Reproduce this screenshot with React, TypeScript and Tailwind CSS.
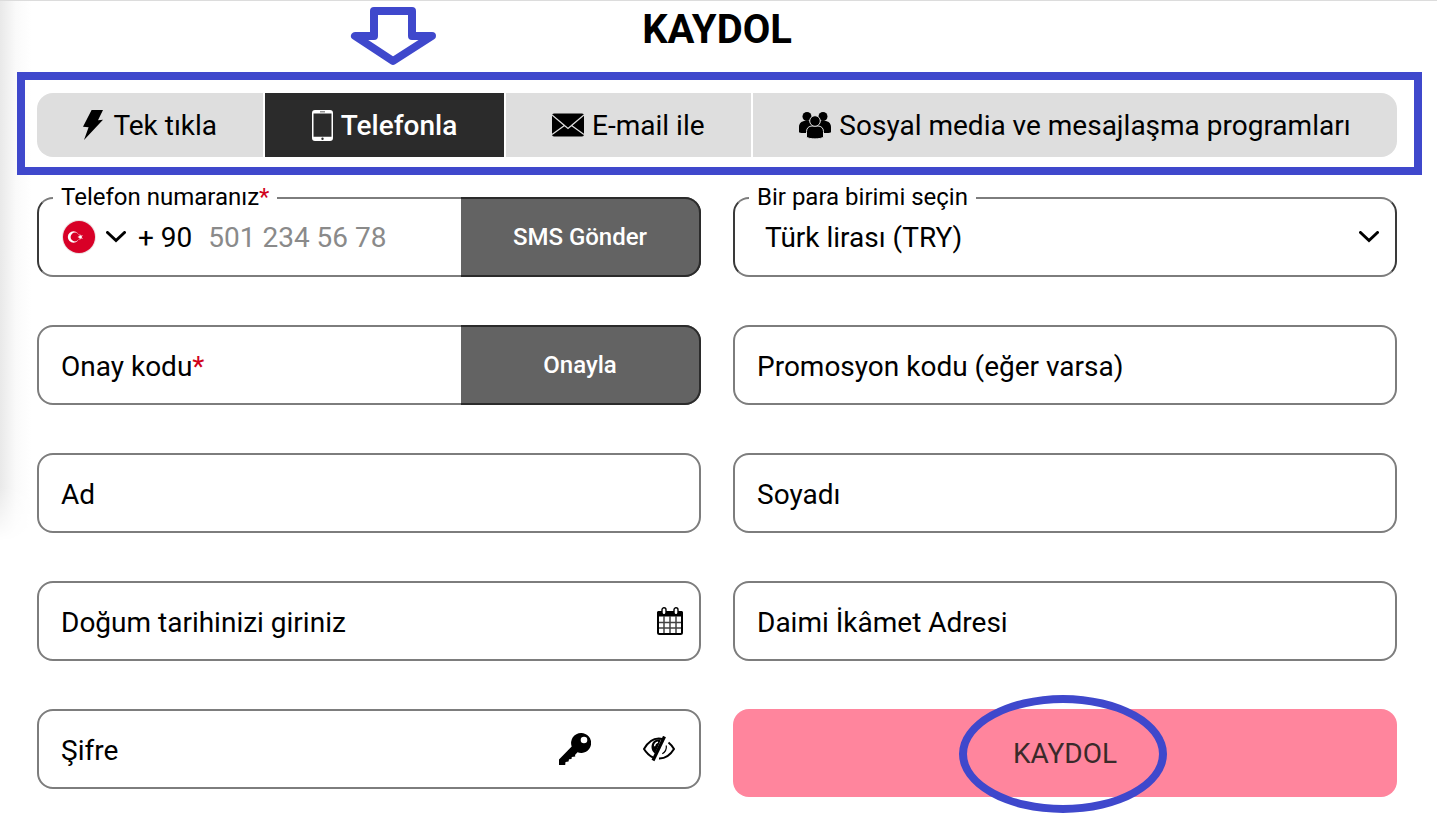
import type { ReactNode } from "react";

const ink = "text-[28px] leading-8 text-black";

function BoltIcon() {
  return (
    <svg viewBox="0 0 20 30" className="mr-0.5 h-[30px] w-5" fill="currentColor" aria-hidden="true">
      <path d="M8.6 0H20l-5 10.2 5-.4L1 30 5.600 17.200 0 16.800z" />
    </svg>
  );
}

function PhoneIcon() {
  return (
    <svg viewBox="0 0 21 31" className="h-[31px] w-[21px]" aria-hidden="true">
      <path
        fillRule="evenodd"
        fill="currentColor"
        d="M3 0h15a3 3 0 0 1 3 3v25a3 3 0 0 1-3 3H3a3 3 0 0 1-3-3V3a3 3 0 0 1 3-3zM1.500 3.600h18v23.200h-18zM8 1.500h5v.8H8zM10.500 27.600a1.200 1.200 0 1 0 0 2.400 1.200 1.200 0 0 0 0-2.400z"
      />
    </svg>
  );
}

function MailIcon() {
  return (
    <svg viewBox="0 0 32 24" className="h-6 w-8" aria-hidden="true">
      <rect width="32" height="23" y=".5" rx="2" fill="currentColor" />
      <path d="M0 2l12.500 10.500L0 21.500M32 2L19.500 12.500 32 21.500M12.500 12.500L16 15.500l3.500-3" fill="none" stroke="#dedede" strokeWidth="1.300" />
    </svg>
  );
}

function PeopleIcon() {
  return (
    <svg viewBox="0 0 32 27" className="h-[27px] w-8" fill="currentColor" aria-hidden="true">
      <circle cx="8" cy="4.500" r="4.500" />
      <circle cx="24" cy="4.500" r="4.500" />
      <path d="M0 20v-5c0-4 3-6 6-6h4c3 0 4 2 4 4v8H4c-2 0-4-.3-4-1zM32 20v-5c0-4-3-6-6-6h-4c-3 0-4 2-4 4v8h10c2 0 4-.3 4-1z" />
      <g stroke="#dedede" strokeWidth="1">
        <path d="M7.500 25V19.500c0-3.500 2.500-5.500 5.500-5.500h6c3 0 5.500 2 5.500 5.500V25c-2 2.500-15 2.500-17 0z" />
        <circle cx="16" cy="9" r="5.300" />
      </g>
    </svg>
  );
}

function Chevron() {
  return (
    <svg viewBox="0 0 20 12" className="h-3 w-5 shrink-0" fill="none" stroke="black" strokeWidth="3" aria-hidden="true">
      <path d="M1.500 1.500L10 9.500l8.500-8" strokeLinecap="round" />
    </svg>
  );
}

function Flag() {
  return (
    <svg viewBox="0 0 34 34" className="h-[34px] w-[34px]" aria-hidden="true">
      <circle cx="17" cy="17" r="17" fill="#ecdfe1" />
      <circle cx="17" cy="17" r="16" fill="#d80027" />
      <circle cx="11.500" cy="17" r="5.700" fill="white" />
      <circle cx="13" cy="17" r="4.400" fill="#d80027" />
      <path fill="white" d="M17.800 13.800l1 1.900 2.100-.4-1.400 1.700 1.400 1.700-2.100-.4-1 1.900-.3-2.200-2-1 2-1z" />
    </svg>
  );
}

function CalendarIcon() {
  return (
    <svg viewBox="0 0 26 28" className="h-7 w-[26px]" aria-hidden="true">
      <rect x="1" y="5" width="24" height="22" rx="1.500" fill="white" stroke="black" strokeWidth="2" />
      <path d="M0 9.500V5.500Q0 4 1.500 4h23Q26 4 26 5.500v4z" />
      <path d="M7 9v17M13 9v17M19 9v17M2 15.500h22M2 21h22" stroke="#444" strokeWidth="1.500" />
      <rect x="5" y=".8" width="4" height="7" rx="2" fill="white" stroke="black" strokeWidth="1.400" />
      <rect x="17" y=".8" width="4" height="7" rx="2" fill="white" stroke="black" strokeWidth="1.400" />
    </svg>
  );
}

function KeyIcon() {
  return (
    <svg viewBox="0 0 32 32" className="h-8 w-8" aria-hidden="true">
      <path
        fillRule="evenodd"
        d="M22 0a10 10 0 1 1-3.500 19.300L16 22l.3 1.500-3.500.5-.3 2-2.500.3-.5 2.200-3 .5-.3 3H0v-5.500L12.700 13.500A10 10 0 0 1 22 0zM25 3.700a3.300 3.300 0 1 0 0 6.600 3.300 3.300 0 0 0 0-6.600z"
      />
    </svg>
  );
}

function EyeOffIcon() {
  return (
    <svg viewBox="0 0 32 26" className="h-[26px] w-8" fill="none" stroke="black" aria-hidden="true">
      <path d="M20 3.100C11 .8 5 6 1 13c2.500 4 5 6.500 9 8.500" strokeWidth="2" />
      <path d="M25.500 6.500C28 8.500 29.500 10.500 31 13c-4 6.500-9 9.700-15 9.500" strokeWidth="2" />
      <path d="M18 3.500c-6-1-9.500 3-9.500 7.500 0 3 1.200 5 3.500 6.500z" fill="black" stroke="none" />
      <path d="M15 6.200c-2 .4-3.300 1.800-3.500 4" stroke="white" strokeWidth="1.300" />
      <path d="M23.300 9.500c.4 3.500-1 6.500-4 8.300" strokeWidth="1.200" />
      <path d="M21.500.5L10 24.500" strokeWidth="3.200" />
    </svg>
  );
}

function DownArrow() {
  return (
    <svg
      viewBox="351 6 86 60"
      className="pointer-events-none absolute -top-[87px] left-[85px] h-[60px] w-[86px]"
      fill="none"
      stroke="#3f48cc"
      strokeWidth="8"
      strokeLinejoin="round"
      aria-hidden="true"
    >
      <path d="M375 11h38v25h20l-39 25-38-25h19z" />
    </svg>
  );
}

function Tab({ icon, label, active, children }: { icon: ReactNode; label: string; active?: boolean; children?: ReactNode }) {
  return (
    <button
      type="button"
      role="tab"
      aria-selected={!!active}
      className={
        "relative flex h-16 flex-auto items-center justify-center gap-2 text-[28px] leading-8 whitespace-nowrap first:rounded-l-2xl last:rounded-r-2xl " +
        (active ? "bg-[#2b2b2b] font-medium text-white" : "bg-[#dedede] text-black")
      }
    >
      {icon}
      <span className="pt-0.5">{label}</span>
      {children}
    </button>
  );
}

function Field({ id, label, type = "text", required, children }: { id: string; label: string; type?: string; required?: boolean; children?: ReactNode }) {
  return (
    <div className="flex h-20 items-center rounded-2xl border-2 border-[#7d7d7d] bg-white pl-[22px]">
      <label htmlFor={id} className={ink + " pt-1 whitespace-nowrap"}>
        {label}
        {required && <span className="text-[#d0021b]">*</span>}
      </label>
      <input id={id} type={type} className={ink + " h-full min-w-0 flex-1 bg-transparent px-2 outline-none"} />
      {children}
    </div>
  );
}

function SideButton({ children }: { children: ReactNode }) {
  return (
    <button
      type="button"
      className="-my-0.5 -mr-0.5 h-20 w-60 shrink-0 rounded-r-2xl border-2 border-l-0 border-[#2b2b2b] bg-[#636363] text-2xl font-medium text-white"
    >
      {children}
    </button>
  );
}

export default function App() {
  return (
    <main className="relative border-t border-[#dcdcdc] bg-white pr-10 pb-7 pl-[37px] font-[Roboto,sans-serif] text-black">
      <div className="pointer-events-none absolute top-0 left-0 h-[540px] w-8 bg-linear-to-r from-[#e9e9e9] via-[#fafafa] to-white mask-b-from-90%" />
      <h1 className="pt-1.5 text-center text-[40px] leading-[46px] font-bold">KAYDOL</h1>

      <div className="relative mt-10">
        <div role="tablist" className="flex gap-0.5">
          <Tab icon={<BoltIcon />} label="Tek tıkla" />
          <Tab icon={<PhoneIcon />} label="Telefonla" active>
            <DownArrow />
          </Tab>
          <Tab icon={<MailIcon />} label="E-mail ile" />
          <Tab icon={<PeopleIcon />} label="Sosyal media ve mesajlaşma programları" />
        </div>
        <div className="pointer-events-none absolute -top-[21px] -right-[25px] -bottom-[18px] -left-5 border-8 border-[#3f48cc]" />
      </div>

      <form className="mt-10 grid grid-cols-2 items-start gap-x-8 gap-y-12" onSubmit={(e) => e.preventDefault()}>
        <div className="relative flex h-20 items-center rounded-2xl border-2 border-x-[#3a3a3a] border-y-[#7d7d7d] pl-[23px]">
          <label htmlFor="phone" className="absolute -top-4 left-3.5 bg-white px-2 text-2xl leading-7">
            Telefon numaranız<span className="text-[#d0021b]">*</span>
          </label>
          <button type="button" aria-label="Ülke kodu" className={"flex items-center " + ink}>
            <Flag />
            <span className="ml-2.5 flex"><Chevron /></span>
            <span className="ml-3 pt-0.5">+ 90</span>
          </button>
          <input
            id="phone"
            type="tel"
            placeholder="501 234 56 78"
            className="ml-4 h-full min-w-0 flex-1 text-[28px] outline-none placeholder:text-[#8a8a8a]"
          />
          <SideButton>SMS Gönder</SideButton>
        </div>

        <div className="relative flex h-20 items-center rounded-2xl border-2 border-x-[#3a3a3a] border-y-[#7d7d7d] pr-4">
          <label htmlFor="currency" className="absolute -top-4 left-3.5 bg-white px-2 text-2xl leading-7">
            Bir para birimi seçin
          </label>
          <select id="currency" className={ink + " h-full min-w-0 flex-1 appearance-none bg-transparent pt-0.5 pl-[30px] outline-none"}>
            <option>Türk lirası (TRY)</option>
          </select>
          <Chevron />
        </div>

        <Field id="code" label="Onay kodu" required>
          <SideButton>Onayla</SideButton>
        </Field>
        <Field id="promo" label="Promosyon kodu (eğer varsa)" />
        <Field id="name" label="Ad" />
        <Field id="surname" label="Soyadı" />
        <Field id="birth" label="Doğum tarihinizi giriniz">
          <button type="button" aria-label="Takvim" className="mr-4">
            <CalendarIcon />
          </button>
        </Field>
        <Field id="address" label="Daimi İkâmet Adresi" />
        <Field id="password" label="Şifre" type="password">
          <button type="button" aria-label="Şifre oluştur" className="mr-[52px]">
            <KeyIcon />
          </button>
          <button type="button" aria-label="Şifreyi göster" className="mr-6">
            <EyeOffIcon />
          </button>
        </Field>

        <div className="relative">
          <button type="submit" className="h-[88px] w-full rounded-2xl bg-[#ff859d] pt-0.5 text-[28px] text-[#3a2a2a]">
            KAYDOL
          </button>
          <div className="pointer-events-none absolute -top-3.5 right-1 -bottom-4 left-0 flex items-center justify-center">
            <div className="h-[118px] w-[208px] rounded-[50%] border-8 border-[#3f48cc]" />
          </div>
        </div>
      </form>
    </main>
  );
}
